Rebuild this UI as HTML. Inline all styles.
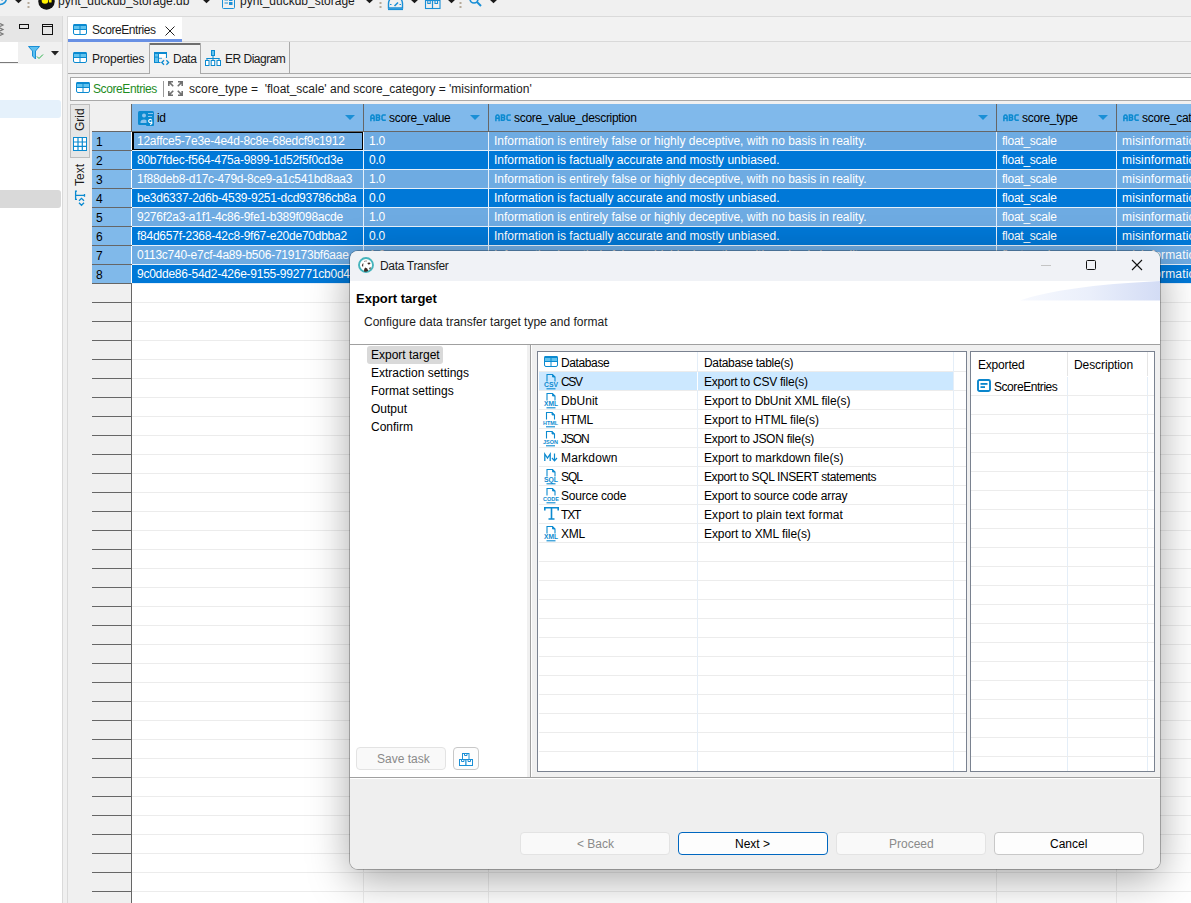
<!DOCTYPE html>
<html><head><meta charset="utf-8">
<style>
*{box-sizing:border-box;margin:0;padding:0}
html,body{width:1191px;height:903px;overflow:hidden;background:#f0f0f0;font-family:"Liberation Sans",sans-serif;font-size:12px;color:#1b1b1b}
.a{position:absolute}
.t{position:absolute;white-space:pre;line-height:14px}
svg{position:absolute;overflow:visible}
</style></head><body>

<div class="a" style="left:0px;top:0px;width:1191px;height:16px;background:#f0f0f0"></div>
<div class="a" style="left:0px;top:16px;width:1191px;height:1px;background:#e3e3e3"></div>
<div class="a" style="left:0px;top:16px;width:63px;height:887px;background:#fff"></div>
<div class="a" style="left:0px;top:16px;width:62px;height:26px;background:#e6e6e6"></div>
<div class="a" style="left:0px;top:42px;width:62px;height:22px;background:#f0f0f0"></div>
<div class="a" style="left:0px;top:42px;width:18px;height:21px;background:#fff;border-bottom:1px solid #7a7a7a"></div>
<div class="a" style="left:62px;top:16px;width:1px;height:887px;background:#dadada"></div>
<div class="a" style="left:-4px;top:100px;width:65px;height:18px;background:#e5f1fb;border-radius:3px"></div>
<div class="a" style="left:-4px;top:190px;width:65px;height:18px;background:#d9d9d9;border-radius:3px"></div>
<div class="a" style="left:63px;top:16px;width:5px;height:887px;background:#f0f0f0"></div>
<div class="a" style="left:67px;top:16px;width:1px;height:887px;background:#dadada"></div>
<div class="a" style="left:68px;top:16px;width:1123px;height:887px;background:#f0f0f0"></div>
<div class="a" style="left:68px;top:16px;width:1123px;height:1px;background:#dadada"></div>
<div class="a" style="left:68px;top:17px;width:1123px;height:24px;background:#f2f2f2"></div>
<div class="a" style="left:68px;top:17px;width:114px;height:25px;background:#fff"></div>
<div class="a" style="left:68px;top:39px;width:114px;height:3px;background:#6890e4"></div>
<div class="a" style="left:182px;top:41px;width:1009px;height:1px;background:#d9d9d9"></div>
<div class="t" style="left:92px;top:23px;letter-spacing:-0.43px">ScoreEntries</div>
<div class="a" style="left:68px;top:73px;width:1123px;height:1px;background:#a9a9a9"></div>
<div class="a" style="left:149px;top:43px;width:52px;height:31px;background:#f2f2f2;border-left:1px solid #a9a9a9;border-right:1px solid #a9a9a9"></div>
<div class="a" style="left:150px;top:43px;width:50px;height:2px;background:#6e6e6e"></div>
<div class="a" style="left:289px;top:42px;width:1px;height:31px;background:#a9a9a9"></div>
<div class="t" style="left:92px;top:52px;letter-spacing:-0.24px">Properties</div>
<div class="t" style="left:173px;top:52px;letter-spacing:-0.5px">Data</div>
<div class="t" style="left:225px;top:52px;letter-spacing:-0.5px">ER Diagram</div>
<div class="a" style="left:70px;top:77px;width:1121px;height:24px;background:#fff;border:1px solid #a9a9a9;border-right:none"></div>
<div class="t" style="left:93px;top:82px;color:#1e8c1e;letter-spacing:-0.4px">ScoreEntries</div>
<div class="a" style="left:163px;top:81px;width:1px;height:16px;background:#9a9a9a"></div>
<div class="t" style="left:189px;top:82px;">score_type =  'float_scale' and score_category = 'misinformation'</div>
<div class="a" style="left:70px;top:104px;width:20px;height:54px;background:#e6e6e6;border:1px solid #bdbdbd"></div>
<div class="t" style="left:73px;top:131px;transform-origin:0 0;transform:rotate(-90deg);color:#1b1b1b">Grid</div>
<div class="t" style="left:73px;top:186px;transform-origin:0 0;transform:rotate(-90deg);color:#1b1b1b">Text</div>
<div class="a" style="left:92px;top:104px;width:1099px;height:799px;background:#fff"></div>
<div class="a" style="left:92px;top:104px;width:39px;height:27px;background:#f0f0f0"></div>
<div class="a" style="left:131px;top:104px;width:1060px;height:27px;background:#80b9eb"></div>
<div class="a" style="left:92px;top:131px;width:1099px;height:1px;background:#666"></div>
<div class="a" style="left:131px;top:104px;width:1px;height:27px;background:#666"></div>
<div class="t" style="left:157px;top:111px;color:#000;letter-spacing:-0.3px">id</div>
<svg style="left:345px;top:115px" width="10" height="5" viewBox="0 0 10 5"><path d="M0 0H10L5 5Z" fill="#1a8fd6"/></svg>
<div class="a" style="left:363px;top:104px;width:1px;height:27px;background:#666"></div>
<div class="t" style="left:389px;top:111px;color:#000;letter-spacing:-0.3px">score_value</div>
<svg style="left:370px;top:114px" width="17" height="8" viewBox="0 0 17 8"><g fill="none" stroke="#0b8ad0" stroke-width="1.5" stroke-linejoin="bevel"><path d="M0.9 7.2V2.2L2 0.9H3L4.1 2.2V7.2M0.9 4.2H4.1"/><path d="M6.4 0.9V6.3M5.6 0.9H8.8L9.6 1.8V2.8L8.8 3.6H6.4M8.8 3.6L9.6 4.4V5.5L8.8 6.3H5.6"/><path d="M15.8 0.9H12.9L12 1.9V5.3L12.9 6.3H15.8"/></g></svg>
<svg style="left:470px;top:115px" width="10" height="5" viewBox="0 0 10 5"><path d="M0 0H10L5 5Z" fill="#1a8fd6"/></svg>
<div class="a" style="left:488px;top:104px;width:1px;height:27px;background:#666"></div>
<div class="t" style="left:514px;top:111px;color:#000;letter-spacing:-0.3px">score_value_description</div>
<svg style="left:495px;top:114px" width="17" height="8" viewBox="0 0 17 8"><g fill="none" stroke="#0b8ad0" stroke-width="1.5" stroke-linejoin="bevel"><path d="M0.9 7.2V2.2L2 0.9H3L4.1 2.2V7.2M0.9 4.2H4.1"/><path d="M6.4 0.9V6.3M5.6 0.9H8.8L9.6 1.8V2.8L8.8 3.6H6.4M8.8 3.6L9.6 4.4V5.5L8.8 6.3H5.6"/><path d="M15.8 0.9H12.9L12 1.9V5.3L12.9 6.3H15.8"/></g></svg>
<svg style="left:978px;top:115px" width="10" height="5" viewBox="0 0 10 5"><path d="M0 0H10L5 5Z" fill="#1a8fd6"/></svg>
<div class="a" style="left:996px;top:104px;width:1px;height:27px;background:#666"></div>
<div class="t" style="left:1022px;top:111px;color:#000;letter-spacing:-0.3px">score_type</div>
<svg style="left:1003px;top:114px" width="17" height="8" viewBox="0 0 17 8"><g fill="none" stroke="#0b8ad0" stroke-width="1.5" stroke-linejoin="bevel"><path d="M0.9 7.2V2.2L2 0.9H3L4.1 2.2V7.2M0.9 4.2H4.1"/><path d="M6.4 0.9V6.3M5.6 0.9H8.8L9.6 1.8V2.8L8.8 3.6H6.4M8.8 3.6L9.6 4.4V5.5L8.8 6.3H5.6"/><path d="M15.8 0.9H12.9L12 1.9V5.3L12.9 6.3H15.8"/></g></svg>
<svg style="left:1098px;top:115px" width="10" height="5" viewBox="0 0 10 5"><path d="M0 0H10L5 5Z" fill="#1a8fd6"/></svg>
<div class="a" style="left:1116px;top:104px;width:1px;height:27px;background:#666"></div>
<div class="t" style="left:1142px;top:111px;color:#000;letter-spacing:-0.3px">score_category</div>
<svg style="left:1123px;top:114px" width="17" height="8" viewBox="0 0 17 8"><g fill="none" stroke="#0b8ad0" stroke-width="1.5" stroke-linejoin="bevel"><path d="M0.9 7.2V2.2L2 0.9H3L4.1 2.2V7.2M0.9 4.2H4.1"/><path d="M6.4 0.9V6.3M5.6 0.9H8.8L9.6 1.8V2.8L8.8 3.6H6.4M8.8 3.6L9.6 4.4V5.5L8.8 6.3H5.6"/><path d="M15.8 0.9H12.9L12 1.9V5.3L12.9 6.3H15.8"/></g></svg>
<svg style="left:138px;top:111px" width="16" height="15" viewBox="0 0 16 15"><rect x="0" y="0" width="16" height="14" rx="1.5" fill="#0b8ad0"/><rect x="8" y="8" width="8" height="7" rx="1" fill="#0b8ad0"/><circle cx="6" cy="4.5" r="2" fill="#8cc4ee"/><path d="M2.5 12V10.5Q3 8.5 6 8.5Q9 8.5 8.5 10.5V12Z" fill="#8cc4ee"/><path d="M10 2.5H15M10 5.5H14" stroke="#8cc4ee" stroke-width="1"/><path d="M13.8 9.5A1.6 1.6 0 1 0 13.8 10.5V12.5L12.2 13.8" fill="none" stroke="#fff" stroke-width="1.1"/></svg>
<div class="a" style="left:92px;top:132px;width:39px;height:18px;background:#80b9ea"></div>
<div class="a" style="left:92px;top:150px;width:40px;height:1px;background:#666"></div>
<div class="a" style="left:132px;top:132px;width:1059px;height:18px;background:#6eabe2"></div>
<div class="a" style="left:132px;top:150px;width:1059px;height:1px;background:#e6f0fa"></div>
<div class="a" style="left:363px;top:132px;width:1px;height:19px;background:#e6f0fa"></div>
<div class="a" style="left:488px;top:132px;width:1px;height:19px;background:#e6f0fa"></div>
<div class="a" style="left:996px;top:132px;width:1px;height:19px;background:#e6f0fa"></div>
<div class="a" style="left:1116px;top:132px;width:1px;height:19px;background:#e6f0fa"></div>
<div class="t" style="left:96px;top:135px;color:#000">1</div>
<div class="a" style="left:132px;top:131px;width:231px;height:19px;overflow:hidden"><div class="t" style="left:5px;top:3px;color:#fff;letter-spacing:-0.25px">12affce5-7e3e-4e4d-8c8e-68edcf9c1912</div></div>
<div class="a" style="left:364px;top:131px;width:124px;height:19px;overflow:hidden"><div class="t" style="left:5px;top:3px;color:#fff;letter-spacing:-0.25px">1.0</div></div>
<div class="a" style="left:489px;top:131px;width:507px;height:19px;overflow:hidden"><div class="t" style="left:5px;top:3px;color:#fff;letter-spacing:0">Information is entirely false or highly deceptive, with no basis in reality.</div></div>
<div class="a" style="left:997px;top:131px;width:119px;height:19px;overflow:hidden"><div class="t" style="left:5px;top:3px;color:#fff;letter-spacing:-0.25px">float_scale</div></div>
<div class="a" style="left:1117px;top:131px;width:74px;height:19px;overflow:hidden"><div class="t" style="left:5px;top:3px;color:#fff;letter-spacing:0.15px">misinformation</div></div>
<div class="a" style="left:92px;top:151px;width:39px;height:18px;background:#80b9ea"></div>
<div class="a" style="left:92px;top:169px;width:40px;height:1px;background:#666"></div>
<div class="a" style="left:132px;top:151px;width:1059px;height:18px;background:#0078d7"></div>
<div class="a" style="left:132px;top:169px;width:1059px;height:1px;background:#e6f0fa"></div>
<div class="a" style="left:363px;top:151px;width:1px;height:19px;background:#e6f0fa"></div>
<div class="a" style="left:488px;top:151px;width:1px;height:19px;background:#e6f0fa"></div>
<div class="a" style="left:996px;top:151px;width:1px;height:19px;background:#e6f0fa"></div>
<div class="a" style="left:1116px;top:151px;width:1px;height:19px;background:#e6f0fa"></div>
<div class="t" style="left:96px;top:154px;color:#000">2</div>
<div class="a" style="left:132px;top:150px;width:231px;height:19px;overflow:hidden"><div class="t" style="left:5px;top:3px;color:#fff;letter-spacing:-0.25px">80b7fdec-f564-475a-9899-1d52f5f0cd3e</div></div>
<div class="a" style="left:364px;top:150px;width:124px;height:19px;overflow:hidden"><div class="t" style="left:5px;top:3px;color:#fff;letter-spacing:-0.25px">0.0</div></div>
<div class="a" style="left:489px;top:150px;width:507px;height:19px;overflow:hidden"><div class="t" style="left:5px;top:3px;color:#fff;letter-spacing:0">Information is factually accurate and mostly unbiased.</div></div>
<div class="a" style="left:997px;top:150px;width:119px;height:19px;overflow:hidden"><div class="t" style="left:5px;top:3px;color:#fff;letter-spacing:-0.25px">float_scale</div></div>
<div class="a" style="left:1117px;top:150px;width:74px;height:19px;overflow:hidden"><div class="t" style="left:5px;top:3px;color:#fff;letter-spacing:0.15px">misinformation</div></div>
<div class="a" style="left:92px;top:170px;width:39px;height:18px;background:#80b9ea"></div>
<div class="a" style="left:92px;top:188px;width:40px;height:1px;background:#666"></div>
<div class="a" style="left:132px;top:170px;width:1059px;height:18px;background:#6eabe2"></div>
<div class="a" style="left:132px;top:188px;width:1059px;height:1px;background:#e6f0fa"></div>
<div class="a" style="left:363px;top:170px;width:1px;height:19px;background:#e6f0fa"></div>
<div class="a" style="left:488px;top:170px;width:1px;height:19px;background:#e6f0fa"></div>
<div class="a" style="left:996px;top:170px;width:1px;height:19px;background:#e6f0fa"></div>
<div class="a" style="left:1116px;top:170px;width:1px;height:19px;background:#e6f0fa"></div>
<div class="t" style="left:96px;top:173px;color:#000">3</div>
<div class="a" style="left:132px;top:169px;width:231px;height:19px;overflow:hidden"><div class="t" style="left:5px;top:3px;color:#fff;letter-spacing:-0.25px">1f88deb8-d17c-479d-8ce9-a1c541bd8aa3</div></div>
<div class="a" style="left:364px;top:169px;width:124px;height:19px;overflow:hidden"><div class="t" style="left:5px;top:3px;color:#fff;letter-spacing:-0.25px">1.0</div></div>
<div class="a" style="left:489px;top:169px;width:507px;height:19px;overflow:hidden"><div class="t" style="left:5px;top:3px;color:#fff;letter-spacing:0">Information is entirely false or highly deceptive, with no basis in reality.</div></div>
<div class="a" style="left:997px;top:169px;width:119px;height:19px;overflow:hidden"><div class="t" style="left:5px;top:3px;color:#fff;letter-spacing:-0.25px">float_scale</div></div>
<div class="a" style="left:1117px;top:169px;width:74px;height:19px;overflow:hidden"><div class="t" style="left:5px;top:3px;color:#fff;letter-spacing:0.15px">misinformation</div></div>
<div class="a" style="left:92px;top:189px;width:39px;height:18px;background:#80b9ea"></div>
<div class="a" style="left:92px;top:207px;width:40px;height:1px;background:#666"></div>
<div class="a" style="left:132px;top:189px;width:1059px;height:18px;background:#0078d7"></div>
<div class="a" style="left:132px;top:207px;width:1059px;height:1px;background:#e6f0fa"></div>
<div class="a" style="left:363px;top:189px;width:1px;height:19px;background:#e6f0fa"></div>
<div class="a" style="left:488px;top:189px;width:1px;height:19px;background:#e6f0fa"></div>
<div class="a" style="left:996px;top:189px;width:1px;height:19px;background:#e6f0fa"></div>
<div class="a" style="left:1116px;top:189px;width:1px;height:19px;background:#e6f0fa"></div>
<div class="t" style="left:96px;top:192px;color:#000">4</div>
<div class="a" style="left:132px;top:188px;width:231px;height:19px;overflow:hidden"><div class="t" style="left:5px;top:3px;color:#fff;letter-spacing:-0.25px">be3d6337-2d6b-4539-9251-dcd93786cb8a</div></div>
<div class="a" style="left:364px;top:188px;width:124px;height:19px;overflow:hidden"><div class="t" style="left:5px;top:3px;color:#fff;letter-spacing:-0.25px">0.0</div></div>
<div class="a" style="left:489px;top:188px;width:507px;height:19px;overflow:hidden"><div class="t" style="left:5px;top:3px;color:#fff;letter-spacing:0">Information is factually accurate and mostly unbiased.</div></div>
<div class="a" style="left:997px;top:188px;width:119px;height:19px;overflow:hidden"><div class="t" style="left:5px;top:3px;color:#fff;letter-spacing:-0.25px">float_scale</div></div>
<div class="a" style="left:1117px;top:188px;width:74px;height:19px;overflow:hidden"><div class="t" style="left:5px;top:3px;color:#fff;letter-spacing:0.15px">misinformation</div></div>
<div class="a" style="left:92px;top:208px;width:39px;height:18px;background:#80b9ea"></div>
<div class="a" style="left:92px;top:226px;width:40px;height:1px;background:#666"></div>
<div class="a" style="left:132px;top:208px;width:1059px;height:18px;background:#6eabe2"></div>
<div class="a" style="left:132px;top:226px;width:1059px;height:1px;background:#e6f0fa"></div>
<div class="a" style="left:363px;top:208px;width:1px;height:19px;background:#e6f0fa"></div>
<div class="a" style="left:488px;top:208px;width:1px;height:19px;background:#e6f0fa"></div>
<div class="a" style="left:996px;top:208px;width:1px;height:19px;background:#e6f0fa"></div>
<div class="a" style="left:1116px;top:208px;width:1px;height:19px;background:#e6f0fa"></div>
<div class="t" style="left:96px;top:211px;color:#000">5</div>
<div class="a" style="left:132px;top:207px;width:231px;height:19px;overflow:hidden"><div class="t" style="left:5px;top:3px;color:#fff;letter-spacing:-0.25px">9276f2a3-a1f1-4c86-9fe1-b389f098acde</div></div>
<div class="a" style="left:364px;top:207px;width:124px;height:19px;overflow:hidden"><div class="t" style="left:5px;top:3px;color:#fff;letter-spacing:-0.25px">1.0</div></div>
<div class="a" style="left:489px;top:207px;width:507px;height:19px;overflow:hidden"><div class="t" style="left:5px;top:3px;color:#fff;letter-spacing:0">Information is entirely false or highly deceptive, with no basis in reality.</div></div>
<div class="a" style="left:997px;top:207px;width:119px;height:19px;overflow:hidden"><div class="t" style="left:5px;top:3px;color:#fff;letter-spacing:-0.25px">float_scale</div></div>
<div class="a" style="left:1117px;top:207px;width:74px;height:19px;overflow:hidden"><div class="t" style="left:5px;top:3px;color:#fff;letter-spacing:0.15px">misinformation</div></div>
<div class="a" style="left:92px;top:227px;width:39px;height:18px;background:#80b9ea"></div>
<div class="a" style="left:92px;top:245px;width:40px;height:1px;background:#666"></div>
<div class="a" style="left:132px;top:227px;width:1059px;height:18px;background:#0078d7"></div>
<div class="a" style="left:132px;top:245px;width:1059px;height:1px;background:#e6f0fa"></div>
<div class="a" style="left:363px;top:227px;width:1px;height:19px;background:#e6f0fa"></div>
<div class="a" style="left:488px;top:227px;width:1px;height:19px;background:#e6f0fa"></div>
<div class="a" style="left:996px;top:227px;width:1px;height:19px;background:#e6f0fa"></div>
<div class="a" style="left:1116px;top:227px;width:1px;height:19px;background:#e6f0fa"></div>
<div class="t" style="left:96px;top:230px;color:#000">6</div>
<div class="a" style="left:132px;top:226px;width:231px;height:19px;overflow:hidden"><div class="t" style="left:5px;top:3px;color:#fff;letter-spacing:-0.25px">f84d657f-2368-42c8-9f67-e20de70dbba2</div></div>
<div class="a" style="left:364px;top:226px;width:124px;height:19px;overflow:hidden"><div class="t" style="left:5px;top:3px;color:#fff;letter-spacing:-0.25px">0.0</div></div>
<div class="a" style="left:489px;top:226px;width:507px;height:19px;overflow:hidden"><div class="t" style="left:5px;top:3px;color:#fff;letter-spacing:0">Information is factually accurate and mostly unbiased.</div></div>
<div class="a" style="left:997px;top:226px;width:119px;height:19px;overflow:hidden"><div class="t" style="left:5px;top:3px;color:#fff;letter-spacing:-0.25px">float_scale</div></div>
<div class="a" style="left:1117px;top:226px;width:74px;height:19px;overflow:hidden"><div class="t" style="left:5px;top:3px;color:#fff;letter-spacing:0.15px">misinformation</div></div>
<div class="a" style="left:92px;top:246px;width:39px;height:18px;background:#80b9ea"></div>
<div class="a" style="left:92px;top:264px;width:40px;height:1px;background:#666"></div>
<div class="a" style="left:132px;top:246px;width:1059px;height:18px;background:#6eabe2"></div>
<div class="a" style="left:132px;top:264px;width:1059px;height:1px;background:#e6f0fa"></div>
<div class="a" style="left:363px;top:246px;width:1px;height:19px;background:#e6f0fa"></div>
<div class="a" style="left:488px;top:246px;width:1px;height:19px;background:#e6f0fa"></div>
<div class="a" style="left:996px;top:246px;width:1px;height:19px;background:#e6f0fa"></div>
<div class="a" style="left:1116px;top:246px;width:1px;height:19px;background:#e6f0fa"></div>
<div class="t" style="left:96px;top:249px;color:#000">7</div>
<div class="a" style="left:132px;top:245px;width:231px;height:19px;overflow:hidden"><div class="t" style="left:5px;top:3px;color:#fff;letter-spacing:-0.25px">0113c740-e7cf-4a89-b506-719173bf6aae</div></div>
<div class="a" style="left:364px;top:245px;width:124px;height:19px;overflow:hidden"><div class="t" style="left:5px;top:3px;color:#fff;letter-spacing:-0.25px">1.0</div></div>
<div class="a" style="left:489px;top:245px;width:507px;height:19px;overflow:hidden"><div class="t" style="left:5px;top:3px;color:#fff;letter-spacing:0">Information is entirely false or highly deceptive, with no basis in reality.</div></div>
<div class="a" style="left:997px;top:245px;width:119px;height:19px;overflow:hidden"><div class="t" style="left:5px;top:3px;color:#fff;letter-spacing:-0.25px">float_scale</div></div>
<div class="a" style="left:1117px;top:245px;width:74px;height:19px;overflow:hidden"><div class="t" style="left:5px;top:3px;color:#fff;letter-spacing:0.15px">misinformation</div></div>
<div class="a" style="left:92px;top:265px;width:39px;height:18px;background:#80b9ea"></div>
<div class="a" style="left:92px;top:283px;width:40px;height:1px;background:#666"></div>
<div class="a" style="left:132px;top:265px;width:1059px;height:18px;background:#0078d7"></div>
<div class="a" style="left:132px;top:283px;width:1059px;height:1px;background:#e6f0fa"></div>
<div class="a" style="left:363px;top:265px;width:1px;height:19px;background:#e6f0fa"></div>
<div class="a" style="left:488px;top:265px;width:1px;height:19px;background:#e6f0fa"></div>
<div class="a" style="left:996px;top:265px;width:1px;height:19px;background:#e6f0fa"></div>
<div class="a" style="left:1116px;top:265px;width:1px;height:19px;background:#e6f0fa"></div>
<div class="t" style="left:96px;top:268px;color:#000">8</div>
<div class="a" style="left:132px;top:264px;width:231px;height:19px;overflow:hidden"><div class="t" style="left:5px;top:3px;color:#fff;letter-spacing:-0.25px">9c0dde86-54d2-426e-9155-992771cb0d41</div></div>
<div class="a" style="left:364px;top:264px;width:124px;height:19px;overflow:hidden"><div class="t" style="left:5px;top:3px;color:#fff;letter-spacing:-0.25px">0.0</div></div>
<div class="a" style="left:489px;top:264px;width:507px;height:19px;overflow:hidden"><div class="t" style="left:5px;top:3px;color:#fff;letter-spacing:0">Information is factually accurate and mostly unbiased.</div></div>
<div class="a" style="left:997px;top:264px;width:119px;height:19px;overflow:hidden"><div class="t" style="left:5px;top:3px;color:#fff;letter-spacing:-0.25px">float_scale</div></div>
<div class="a" style="left:1117px;top:264px;width:74px;height:19px;overflow:hidden"><div class="t" style="left:5px;top:3px;color:#fff;letter-spacing:0.15px">misinformation</div></div>
<div class="a" style="left:132px;top:132px;width:231px;height:18px;border:1px solid #000;border-left-width:2px;border-top-width:1px"></div>
<div class="a" style="left:92px;top:284px;width:39px;height:18px;background:#f0f0f0"></div>
<div class="a" style="left:92px;top:302px;width:39px;height:1px;background:#666"></div>
<div class="a" style="left:132px;top:302px;width:1059px;height:1px;background:#ececec"></div>
<div class="a" style="left:92px;top:303px;width:39px;height:18px;background:#f0f0f0"></div>
<div class="a" style="left:92px;top:321px;width:39px;height:1px;background:#666"></div>
<div class="a" style="left:132px;top:321px;width:1059px;height:1px;background:#ececec"></div>
<div class="a" style="left:92px;top:322px;width:39px;height:18px;background:#f0f0f0"></div>
<div class="a" style="left:92px;top:340px;width:39px;height:1px;background:#666"></div>
<div class="a" style="left:132px;top:340px;width:1059px;height:1px;background:#ececec"></div>
<div class="a" style="left:92px;top:341px;width:39px;height:18px;background:#f0f0f0"></div>
<div class="a" style="left:92px;top:359px;width:39px;height:1px;background:#666"></div>
<div class="a" style="left:132px;top:359px;width:1059px;height:1px;background:#ececec"></div>
<div class="a" style="left:92px;top:360px;width:39px;height:18px;background:#f0f0f0"></div>
<div class="a" style="left:92px;top:378px;width:39px;height:1px;background:#666"></div>
<div class="a" style="left:132px;top:378px;width:1059px;height:1px;background:#ececec"></div>
<div class="a" style="left:92px;top:379px;width:39px;height:18px;background:#f0f0f0"></div>
<div class="a" style="left:92px;top:397px;width:39px;height:1px;background:#666"></div>
<div class="a" style="left:132px;top:397px;width:1059px;height:1px;background:#ececec"></div>
<div class="a" style="left:92px;top:398px;width:39px;height:18px;background:#f0f0f0"></div>
<div class="a" style="left:92px;top:416px;width:39px;height:1px;background:#666"></div>
<div class="a" style="left:132px;top:416px;width:1059px;height:1px;background:#ececec"></div>
<div class="a" style="left:92px;top:417px;width:39px;height:18px;background:#f0f0f0"></div>
<div class="a" style="left:92px;top:435px;width:39px;height:1px;background:#666"></div>
<div class="a" style="left:132px;top:435px;width:1059px;height:1px;background:#ececec"></div>
<div class="a" style="left:92px;top:436px;width:39px;height:18px;background:#f0f0f0"></div>
<div class="a" style="left:92px;top:454px;width:39px;height:1px;background:#666"></div>
<div class="a" style="left:132px;top:454px;width:1059px;height:1px;background:#ececec"></div>
<div class="a" style="left:92px;top:455px;width:39px;height:18px;background:#f0f0f0"></div>
<div class="a" style="left:92px;top:473px;width:39px;height:1px;background:#666"></div>
<div class="a" style="left:132px;top:473px;width:1059px;height:1px;background:#ececec"></div>
<div class="a" style="left:92px;top:474px;width:39px;height:18px;background:#f0f0f0"></div>
<div class="a" style="left:92px;top:492px;width:39px;height:1px;background:#666"></div>
<div class="a" style="left:132px;top:492px;width:1059px;height:1px;background:#ececec"></div>
<div class="a" style="left:92px;top:493px;width:39px;height:18px;background:#f0f0f0"></div>
<div class="a" style="left:92px;top:511px;width:39px;height:1px;background:#666"></div>
<div class="a" style="left:132px;top:511px;width:1059px;height:1px;background:#ececec"></div>
<div class="a" style="left:92px;top:512px;width:39px;height:18px;background:#f0f0f0"></div>
<div class="a" style="left:92px;top:530px;width:39px;height:1px;background:#666"></div>
<div class="a" style="left:132px;top:530px;width:1059px;height:1px;background:#ececec"></div>
<div class="a" style="left:92px;top:531px;width:39px;height:18px;background:#f0f0f0"></div>
<div class="a" style="left:92px;top:549px;width:39px;height:1px;background:#666"></div>
<div class="a" style="left:132px;top:549px;width:1059px;height:1px;background:#ececec"></div>
<div class="a" style="left:92px;top:550px;width:39px;height:18px;background:#f0f0f0"></div>
<div class="a" style="left:92px;top:568px;width:39px;height:1px;background:#666"></div>
<div class="a" style="left:132px;top:568px;width:1059px;height:1px;background:#ececec"></div>
<div class="a" style="left:92px;top:569px;width:39px;height:18px;background:#f0f0f0"></div>
<div class="a" style="left:92px;top:587px;width:39px;height:1px;background:#666"></div>
<div class="a" style="left:132px;top:587px;width:1059px;height:1px;background:#ececec"></div>
<div class="a" style="left:92px;top:588px;width:39px;height:18px;background:#f0f0f0"></div>
<div class="a" style="left:92px;top:606px;width:39px;height:1px;background:#666"></div>
<div class="a" style="left:132px;top:606px;width:1059px;height:1px;background:#ececec"></div>
<div class="a" style="left:92px;top:607px;width:39px;height:18px;background:#f0f0f0"></div>
<div class="a" style="left:92px;top:625px;width:39px;height:1px;background:#666"></div>
<div class="a" style="left:132px;top:625px;width:1059px;height:1px;background:#ececec"></div>
<div class="a" style="left:92px;top:626px;width:39px;height:18px;background:#f0f0f0"></div>
<div class="a" style="left:92px;top:644px;width:39px;height:1px;background:#666"></div>
<div class="a" style="left:132px;top:644px;width:1059px;height:1px;background:#ececec"></div>
<div class="a" style="left:92px;top:645px;width:39px;height:18px;background:#f0f0f0"></div>
<div class="a" style="left:92px;top:663px;width:39px;height:1px;background:#666"></div>
<div class="a" style="left:132px;top:663px;width:1059px;height:1px;background:#ececec"></div>
<div class="a" style="left:92px;top:664px;width:39px;height:18px;background:#f0f0f0"></div>
<div class="a" style="left:92px;top:682px;width:39px;height:1px;background:#666"></div>
<div class="a" style="left:132px;top:682px;width:1059px;height:1px;background:#ececec"></div>
<div class="a" style="left:92px;top:683px;width:39px;height:18px;background:#f0f0f0"></div>
<div class="a" style="left:92px;top:701px;width:39px;height:1px;background:#666"></div>
<div class="a" style="left:132px;top:701px;width:1059px;height:1px;background:#ececec"></div>
<div class="a" style="left:92px;top:702px;width:39px;height:18px;background:#f0f0f0"></div>
<div class="a" style="left:92px;top:720px;width:39px;height:1px;background:#666"></div>
<div class="a" style="left:132px;top:720px;width:1059px;height:1px;background:#ececec"></div>
<div class="a" style="left:92px;top:721px;width:39px;height:18px;background:#f0f0f0"></div>
<div class="a" style="left:92px;top:739px;width:39px;height:1px;background:#666"></div>
<div class="a" style="left:132px;top:739px;width:1059px;height:1px;background:#ececec"></div>
<div class="a" style="left:92px;top:740px;width:39px;height:18px;background:#f0f0f0"></div>
<div class="a" style="left:92px;top:758px;width:39px;height:1px;background:#666"></div>
<div class="a" style="left:132px;top:758px;width:1059px;height:1px;background:#ececec"></div>
<div class="a" style="left:92px;top:759px;width:39px;height:18px;background:#f0f0f0"></div>
<div class="a" style="left:92px;top:777px;width:39px;height:1px;background:#666"></div>
<div class="a" style="left:132px;top:777px;width:1059px;height:1px;background:#ececec"></div>
<div class="a" style="left:92px;top:778px;width:39px;height:18px;background:#f0f0f0"></div>
<div class="a" style="left:92px;top:796px;width:39px;height:1px;background:#666"></div>
<div class="a" style="left:132px;top:796px;width:1059px;height:1px;background:#ececec"></div>
<div class="a" style="left:92px;top:797px;width:39px;height:18px;background:#f0f0f0"></div>
<div class="a" style="left:92px;top:815px;width:39px;height:1px;background:#666"></div>
<div class="a" style="left:132px;top:815px;width:1059px;height:1px;background:#ececec"></div>
<div class="a" style="left:92px;top:816px;width:39px;height:18px;background:#f0f0f0"></div>
<div class="a" style="left:92px;top:834px;width:39px;height:1px;background:#666"></div>
<div class="a" style="left:132px;top:834px;width:1059px;height:1px;background:#ececec"></div>
<div class="a" style="left:92px;top:835px;width:39px;height:18px;background:#f0f0f0"></div>
<div class="a" style="left:92px;top:853px;width:39px;height:1px;background:#666"></div>
<div class="a" style="left:132px;top:853px;width:1059px;height:1px;background:#ececec"></div>
<div class="a" style="left:92px;top:854px;width:39px;height:18px;background:#f0f0f0"></div>
<div class="a" style="left:92px;top:872px;width:39px;height:1px;background:#666"></div>
<div class="a" style="left:132px;top:872px;width:1059px;height:1px;background:#ececec"></div>
<div class="a" style="left:92px;top:873px;width:39px;height:18px;background:#f0f0f0"></div>
<div class="a" style="left:92px;top:891px;width:39px;height:1px;background:#666"></div>
<div class="a" style="left:132px;top:891px;width:1059px;height:1px;background:#ececec"></div>
<div class="a" style="left:92px;top:892px;width:39px;height:18px;background:#f0f0f0"></div>
<div class="a" style="left:92px;top:910px;width:39px;height:1px;background:#666"></div>
<div class="a" style="left:132px;top:910px;width:1059px;height:1px;background:#ececec"></div>
<div class="a" style="left:131px;top:283px;width:1px;height:620px;background:#666"></div>
<div class="a" style="left:363px;top:283px;width:1px;height:620px;background:#ececec"></div>
<div class="a" style="left:488px;top:283px;width:1px;height:620px;background:#ececec"></div>
<div class="a" style="left:996px;top:283px;width:1px;height:620px;background:#ececec"></div>
<div class="a" style="left:1116px;top:283px;width:1px;height:620px;background:#ececec"></div>
<div class="a" style="left:0;top:0;width:1191px;height:16px;overflow:hidden">
<svg style="left:-8px;top:-10px" width="16" height="16" viewBox="0 0 16 16"><circle cx="8" cy="8" r="6.5" fill="none" stroke="#1a8fd6" stroke-width="1.5"/><path d="M8 4V8L10.5 10.5" stroke="#1a8fd6" stroke-width="1.3" fill="none"/></svg>
<svg style="left:15px;top:0px" width="7" height="5" viewBox="0 0 7 5"><path d="M-0.5 -0.5H7.5L3.5 3.2Z" fill="#1a1a1a"/></svg>
<svg style="left:27px;top:1px" width="3" height="8" viewBox="0 0 3 8"><rect x="0.5" y="1" width="2" height="2" fill="#b5aa9a"/><rect x="0.5" y="5" width="2" height="2" fill="#b5aa9a"/></svg>
<svg style="left:38px;top:-7px" width="17" height="17" viewBox="0 0 17 17"><circle cx="8.5" cy="8.5" r="8.2" fill="#111"/><circle cx="7" cy="7.5" r="3.3" fill="#fff100"/><rect x="11" y="6" width="2.6" height="3.5" rx="0.6" fill="#fff100"/></svg>
<div class="t" style="left:58px;top:-6px;color:#1b1b1b">pyrit_duckdb_storage.db</div>
<svg style="left:203px;top:0px" width="7" height="5" viewBox="0 0 7 5"><path d="M-0.5 -0.5H7.5L3.5 3.2Z" fill="#1a1a1a"/></svg>
<svg style="left:222px;top:-4px" width="13" height="13" viewBox="0 0 13 13"><rect x="0.5" y="0.5" width="12" height="12" rx="1" fill="none" stroke="#1a8fd6"/><path d="M2.5 4H6M2.5 7H6" stroke="#1a8fd6"/><rect x="7" y="2.5" width="3.5" height="2.5" fill="#1a8fd6"/><rect x="7" y="6" width="3.5" height="3" fill="#1a8fd6"/></svg>
<div class="t" style="left:240px;top:-6px;color:#1b1b1b">pyrit_duckdb_storage</div>
<svg style="left:366px;top:0px" width="7" height="5" viewBox="0 0 7 5"><path d="M-0.5 -0.5H7.5L3.5 3.2Z" fill="#1a1a1a"/></svg>
<svg style="left:379px;top:1px" width="3" height="8" viewBox="0 0 3 8"><rect x="0.5" y="1" width="2" height="2" fill="#b5aa9a"/><rect x="0.5" y="5" width="2" height="2" fill="#b5aa9a"/></svg>
<svg style="left:387px;top:-5px" width="17" height="16" viewBox="0 0 17 16"><path d="M1.5 13V8.5A7 7 0 0 1 15.5 8.5V13Z" fill="none" stroke="#1a8fd6" stroke-width="1.4"/><path d="M1 14.3H16" stroke="#1a8fd6" stroke-width="1.6"/><path d="M7.5 11L11 7.5" stroke="#1a8fd6" stroke-width="1.6"/><path d="M3 9.5H4.5M12.5 9.5H14" stroke="#1a8fd6" stroke-width="1"/></svg>
<svg style="left:411px;top:0px" width="7" height="5" viewBox="0 0 7 5"><path d="M-0.5 -0.5H7.5L3.5 3.2Z" fill="#1a1a1a"/></svg>
<svg style="left:425px;top:-2px" width="16" height="12" viewBox="0 0 16 12"><g fill="none" stroke="#1a8fd6" stroke-width="1.1"><rect x="0.5" y="2.5" width="7" height="8"/><rect x="7.5" y="2.5" width="7.5" height="8"/><path d="M2.8 2.5V5.5H5.2V2.5M10 2.5V5.5H12.5V2.5"/></g></svg>
<svg style="left:448px;top:0px" width="7" height="5" viewBox="0 0 7 5"><path d="M-0.5 -0.5H7.5L3.5 3.2Z" fill="#1a1a1a"/></svg>
<svg style="left:459px;top:1px" width="3" height="8" viewBox="0 0 3 8"><rect x="0.5" y="1" width="2" height="2" fill="#b5aa9a"/><rect x="0.5" y="5" width="2" height="2" fill="#b5aa9a"/></svg>
<svg style="left:469px;top:-5px" width="14" height="12" viewBox="0 0 14 12"><circle cx="5" cy="4" r="4" fill="none" stroke="#1a8fd6" stroke-width="1.6"/><path d="M8 7L12 11" stroke="#1a8fd6" stroke-width="2"/></svg>
<svg style="left:490px;top:0px" width="7" height="5" viewBox="0 0 7 5"><path d="M-0.5 -0.5H7.5L3.5 3.2Z" fill="#1a1a1a"/></svg>
</div>
<svg style="left:73px;top:24px" width="14" height="11" viewBox="0 0 14 11"><rect x="0.5" y="0.5" width="13" height="10" rx="1.5" fill="#fff" stroke="#0b8ad0"/><rect x="0.5" y="0" width="13" height="2" fill="#0b8ad0"/><rect x="1" y="2" width="12" height="3.5" fill="#62c3ee"/><path d="M0.5 5.5H13.5M7 0.5V10.5" stroke="#0b8ad0"/></svg>
<svg style="left:73px;top:52px" width="14" height="11" viewBox="0 0 14 11"><rect x="0.5" y="0.5" width="13" height="10" rx="1.5" fill="#fff" stroke="#0b8ad0"/><rect x="0.5" y="0" width="13" height="2" fill="#0b8ad0"/><rect x="1" y="2" width="12" height="3.5" fill="#62c3ee"/><path d="M0.5 5.5H13.5M7 0.5V10.5" stroke="#0b8ad0"/></svg>
<svg style="left:76px;top:82px" width="14" height="11" viewBox="0 0 14 11"><rect x="0.5" y="0.5" width="13" height="10" rx="1.5" fill="#fff" stroke="#0b8ad0"/><rect x="0.5" y="0" width="13" height="2" fill="#0b8ad0"/><rect x="1" y="2" width="12" height="3.5" fill="#62c3ee"/><path d="M0.5 5.5H13.5M7 0.5V10.5" stroke="#0b8ad0"/></svg>
<svg style="left:165px;top:26px" width="10" height="10" viewBox="0 0 10 10"><path d="M0.5 0.5L9.5 9.5M9.5 0.5L0.5 9.5" stroke="#222" stroke-width="1"/></svg>
<svg style="left:154px;top:52px" width="16" height="14" viewBox="0 0 16 14"><rect x="0" y="0" width="13" height="2" fill="#0b8ad0"/><rect x="0" y="0" width="5" height="11" fill="#0b8ad0"/><rect x="1" y="2" width="3" height="2.6" fill="#62c3ee"/><rect x="1" y="5.6" width="3" height="4.4" fill="#62c3ee"/><rect x="11.8" y="0" width="1.2" height="6" fill="#0b8ad0"/><rect x="5" y="5.6" width="3" height="1" fill="#0b8ad0"/><rect x="5" y="10" width="1.5" height="1" fill="#0b8ad0"/><rect x="5" y="2" width="6.8" height="3.6" fill="#fff"/><path d="M10 8.2L7.8 10.5L10 12.8M12.4 8.2L14.6 10.5L12.4 12.8" fill="none" stroke="#0b8ad0" stroke-width="1.3"/></svg>
<svg style="left:205px;top:50px" width="16" height="16" viewBox="0 0 16 16"><rect x="6.5" y="0.5" width="3" height="5" fill="#62c3ee" stroke="#0b8ad0"/><path d="M8 5.5V8M1.5 8.5H14.5M2 8V10M8 8V10M14 8V10" stroke="#0b8ad0"/><rect x="0.5" y="10.5" width="3.5" height="5" fill="#fff" stroke="#0b8ad0"/><rect x="6.2" y="10.5" width="3.5" height="5" fill="#fff" stroke="#0b8ad0"/><rect x="12" y="10.5" width="3.5" height="5" fill="#fff" stroke="#0b8ad0"/></svg>
<svg style="left:168px;top:81px" width="15" height="15" viewBox="0 0 15 15"><g fill="#707070"><path d="M0 0H5V1.6H2.7L5.8 4.7L4.7 5.8L1.6 2.7V5H0Z"/><path d="M15 0H10V1.6H12.3L9.2 4.7L10.3 5.8L13.4 2.7V5H15Z"/><path d="M0 15H5V13.4H2.7L5.8 10.3L4.7 9.2L1.6 12.3V10H0Z"/><path d="M15 15H10V13.4H12.3L9.2 10.3L10.3 9.2L13.4 12.3V10H15Z"/></g></svg>
<svg style="left:73px;top:137px" width="14" height="14" viewBox="0 0 14 14"><rect x="0.5" y="0.5" width="13" height="13" fill="#fff" stroke="#0b8ad0"/><path d="M0.5 5H13.5M0.5 9.3H13.5M5 0.5V13.5M9.3 0.5V13.5" stroke="#0b8ad0" stroke-width="1.2"/></svg>
<svg style="left:70px;top:185px" width="20" height="25" viewBox="0 0 20 25"><g fill="none" stroke="#0b8ad0" stroke-width="1.3"><path d="M7 6.2H5.6V14.3H7M5.6 10.4H14.5M14.5 9V11.8M9 15.8L11.5 13.3L14 15.8M9 17.8L11.5 20.3L14 17.8"/></g></svg>
<svg style="left:19px;top:24px" width="10" height="5" viewBox="0 0 10 5"><rect x="0.5" y="0.5" width="9" height="4" fill="none" stroke="#111"/></svg>
<svg style="left:42px;top:24px" width="11" height="11" viewBox="0 0 11 11"><rect x="0.5" y="0.5" width="10" height="10" fill="none" stroke="#111"/><path d="M0.5 2.5H10.5" stroke="#111"/></svg>
<svg style="left:0px;top:22px" width="5" height="15" viewBox="0 0 5 15"><path d="M0 1.5L3 3L0 4.5M0 6L3 7.5L0 9M0 10.5L3 12L0 13.5" fill="none" stroke="#777" stroke-width="1.2"/></svg>
<svg style="left:28px;top:46px" width="17" height="14" viewBox="0 0 17 14"><path d="M0.5 0.5H11.5L7.5 5V13L4.5 10V5Z" fill="#5ec0ef" stroke="#1a8fd6"/><path d="M9 10.5L11 12.5L15 8.5" fill="none" stroke="#2bb14a" stroke-width="1"/></svg>
<svg style="left:51px;top:51px" width="8" height="5" viewBox="0 0 8 5"><path d="M0 0H8L4 4.5Z" fill="#222"/></svg>
<div class="a" style="left:350px;top:251px;width:810px;height:618px;background:#f0f0f0;border-radius:8px;box-shadow:0 10px 42px rgba(0,0,0,.35),0 0 0 1px rgba(0,0,0,.26);overflow:hidden">
<div class="a" style="left:-1px;top:0px;width:811px;height:30px;background:#f0f2f6"></div>
<svg style="left:8px;top:6px" width="16" height="16" viewBox="0 0 16 16"><circle cx="8" cy="8" r="7" fill="#fff" stroke="#45b4bc" stroke-width="1.9"/><path d="M6 14.6Q5.8 11.6 7.3 10.6Q9.6 11 10.2 13.8Q9 14.9 6 14.6Z" fill="#3d2a22"/><path d="M9.3 5.9Q11 5.3 12.6 5.9Q11.6 7.7 10.4 7.4Z" fill="#3d2a22"/><path d="M3.8 8.8Q4 6.5 5.4 6.1L5.1 9.9Z" fill="#4a3a34"/><path d="M11.8 10.2L13 10.6L12.3 12.6L11 12Z" fill="#5a4a44"/><path d="M6 4.6Q7.5 3.8 9 4" stroke="#7a6a64" stroke-width="0.7" fill="none"/></svg>
<div class="t" style="left:30px;top:8px;letter-spacing:-0.32px">Data Transfer</div>
<div class="a" style="left:691px;top:14px;width:10px;height:1px;background:#c4c4c4"></div>
<div class="a" style="left:736px;top:9px;width:10px;height:10px;border:1px solid #111;border-radius:1.5px"></div>
<svg style="left:781px;top:8px" width="12" height="12" viewBox="0 0 12 12"><path d="M1 1 L11 11 M11 1 L1 11" stroke="#111" stroke-width="1.1"/></svg>
<div class="a" style="left:-1px;top:30px;width:811px;height:63px;background:#fff"></div>
<svg style="left:670px;top:29px" width="140" height="22" viewBox="0 0 140 22"><defs><linearGradient id="sw" x1="0" x2="1"><stop offset="0" stop-color="#f7f9fe"/><stop offset="0.5" stop-color="#eaeffb"/><stop offset="1" stop-color="#d3dcf5"/></linearGradient></defs><path d="M0 20.6 Q 40 6 140 1 L140 20.6 Z" fill="url(#sw)"/></svg>
<div class="t" style="left:6px;top:41px;font-weight:bold;font-size:13px;color:#000">Export target</div>
<div class="t" style="left:14px;top:64px;">Configure data transfer target type and format</div>
<div class="a" style="left:-1px;top:93px;width:811px;height:1px;background:#a0a0a0"></div>
<div class="a" style="left:-1px;top:94px;width:811px;height:1px;background:#fff"></div>
<div class="a" style="left:-1px;top:94px;width:178px;height:432px;background:#fff"></div>
<div class="a" style="left:177px;top:94px;width:633px;height:432px;background:#f0f0f0"></div>
<div class="a" style="left:180px;top:94px;width:1px;height:432px;background:#a0a0a0"></div>
<div class="a" style="left:181px;top:94px;width:1px;height:432px;background:#fff"></div>
<div class="a" style="left:17px;top:95px;width:76px;height:18px;background:#d9d9d9;border-radius:3px"></div>
<div class="t" style="left:21px;top:97px;color:#000">Export target</div>
<div class="t" style="left:21px;top:115px;color:#000">Extraction settings</div>
<div class="t" style="left:21px;top:133px;color:#000">Format settings</div>
<div class="t" style="left:21px;top:151px;color:#000">Output</div>
<div class="t" style="left:21px;top:169px;color:#000">Confirm</div>
<div class="a" style="left:6px;top:496px;width:90px;height:23px;background:#f9f9f9;border:1px solid #e3e3e3;border-radius:4px"></div>
<div class="t" style="left:27px;top:501px;color:#8a8a8a">Save task</div>
<div class="a" style="left:103px;top:496px;width:26px;height:23px;background:#fdfdfd;border:1px solid #c8c8c8;border-radius:4px"></div>
<svg style="left:109px;top:501px" width="14" height="14" viewBox="0 0 14 14"><g fill="#fff" stroke="#1a8fd6" stroke-width="1"><rect x="3.5" y="1.5" width="6.5" height="6"/><rect x="0.5" y="7.5" width="6.5" height="6"/><rect x="7" y="7.5" width="6.5" height="6"/><path d="M5.5 1.5V3.5H8V1.5M2.5 7.5V9.5H5V7.5M9 7.5V9.5H11.5V7.5" fill="none"/></g></svg>
<div class="a" style="left:187px;top:100px;width:430px;height:421px;background:#fff;border:1px solid #7a8290"></div>
<div class="a" style="left:189px;top:120px;width:414px;height:1px;background:#ececec"></div>
<div class="a" style="left:604px;top:120px;width:12px;height:1px;background:#ececec"></div>
<div class="a" style="left:189px;top:139px;width:414px;height:1px;background:#ececec"></div>
<div class="a" style="left:604px;top:139px;width:12px;height:1px;background:#ececec"></div>
<div class="a" style="left:189px;top:158px;width:414px;height:1px;background:#ececec"></div>
<div class="a" style="left:604px;top:158px;width:12px;height:1px;background:#ececec"></div>
<div class="a" style="left:189px;top:177px;width:414px;height:1px;background:#ececec"></div>
<div class="a" style="left:604px;top:177px;width:12px;height:1px;background:#ececec"></div>
<div class="a" style="left:189px;top:196px;width:414px;height:1px;background:#ececec"></div>
<div class="a" style="left:604px;top:196px;width:12px;height:1px;background:#ececec"></div>
<div class="a" style="left:189px;top:215px;width:414px;height:1px;background:#ececec"></div>
<div class="a" style="left:604px;top:215px;width:12px;height:1px;background:#ececec"></div>
<div class="a" style="left:189px;top:234px;width:414px;height:1px;background:#ececec"></div>
<div class="a" style="left:604px;top:234px;width:12px;height:1px;background:#ececec"></div>
<div class="a" style="left:189px;top:253px;width:414px;height:1px;background:#ececec"></div>
<div class="a" style="left:604px;top:253px;width:12px;height:1px;background:#ececec"></div>
<div class="a" style="left:189px;top:272px;width:414px;height:1px;background:#ececec"></div>
<div class="a" style="left:604px;top:272px;width:12px;height:1px;background:#ececec"></div>
<div class="a" style="left:189px;top:291px;width:414px;height:1px;background:#ececec"></div>
<div class="a" style="left:604px;top:291px;width:12px;height:1px;background:#ececec"></div>
<div class="a" style="left:189px;top:310px;width:414px;height:1px;background:#ececec"></div>
<div class="a" style="left:604px;top:310px;width:12px;height:1px;background:#ececec"></div>
<div class="a" style="left:189px;top:329px;width:414px;height:1px;background:#ececec"></div>
<div class="a" style="left:604px;top:329px;width:12px;height:1px;background:#ececec"></div>
<div class="a" style="left:189px;top:348px;width:414px;height:1px;background:#ececec"></div>
<div class="a" style="left:604px;top:348px;width:12px;height:1px;background:#ececec"></div>
<div class="a" style="left:189px;top:367px;width:414px;height:1px;background:#ececec"></div>
<div class="a" style="left:604px;top:367px;width:12px;height:1px;background:#ececec"></div>
<div class="a" style="left:189px;top:386px;width:414px;height:1px;background:#ececec"></div>
<div class="a" style="left:604px;top:386px;width:12px;height:1px;background:#ececec"></div>
<div class="a" style="left:189px;top:405px;width:414px;height:1px;background:#ececec"></div>
<div class="a" style="left:604px;top:405px;width:12px;height:1px;background:#ececec"></div>
<div class="a" style="left:189px;top:424px;width:414px;height:1px;background:#ececec"></div>
<div class="a" style="left:604px;top:424px;width:12px;height:1px;background:#ececec"></div>
<div class="a" style="left:189px;top:443px;width:414px;height:1px;background:#ececec"></div>
<div class="a" style="left:604px;top:443px;width:12px;height:1px;background:#ececec"></div>
<div class="a" style="left:189px;top:462px;width:414px;height:1px;background:#ececec"></div>
<div class="a" style="left:604px;top:462px;width:12px;height:1px;background:#ececec"></div>
<div class="a" style="left:189px;top:481px;width:414px;height:1px;background:#ececec"></div>
<div class="a" style="left:604px;top:481px;width:12px;height:1px;background:#ececec"></div>
<div class="a" style="left:189px;top:500px;width:414px;height:1px;background:#ececec"></div>
<div class="a" style="left:604px;top:500px;width:12px;height:1px;background:#ececec"></div>
<div class="a" style="left:347px;top:101px;width:1px;height:419px;background:#e4eef8"></div>
<div class="a" style="left:603px;top:101px;width:1px;height:419px;background:#e4eef8"></div>
<div class="a" style="left:189px;top:121px;width:414px;height:18px;background:#cce8ff"></div>
<div class="a" style="left:347px;top:121px;width:1px;height:18px;background:#fff"></div>
<div class="t" style="left:211px;top:105px;color:#000;letter-spacing:-0.38px">Database</div>
<div class="t" style="left:354px;top:105px;color:#000;letter-spacing:-0.32px">Database table(s)</div>
<div class="t" style="left:211px;top:124px;color:#000;letter-spacing:-1.3px">CSV</div>
<div class="t" style="left:354px;top:124px;color:#000;letter-spacing:-0.24px">Export to CSV file(s)</div>
<div class="t" style="left:211px;top:143px;color:#000;letter-spacing:0.05px">DbUnit</div>
<div class="t" style="left:354px;top:143px;color:#000;letter-spacing:-0.07px">Export to DbUnit XML file(s)</div>
<div class="t" style="left:211px;top:162px;color:#000;letter-spacing:-0.17px">HTML</div>
<div class="t" style="left:354px;top:162px;color:#000;letter-spacing:-0.06px">Export to HTML file(s)</div>
<div class="t" style="left:211px;top:181px;color:#000;letter-spacing:-1.1px">JSON</div>
<div class="t" style="left:354px;top:181px;color:#000;letter-spacing:-0.27px">Export to JSON file(s)</div>
<div class="t" style="left:211px;top:200px;color:#000;letter-spacing:0.16px">Markdown</div>
<div class="t" style="left:354px;top:200px;color:#000;letter-spacing:0.0px">Export to markdown file(s)</div>
<div class="t" style="left:211px;top:219px;color:#000;letter-spacing:-1.07px">SQL</div>
<div class="t" style="left:354px;top:219px;color:#000;letter-spacing:-0.38px">Export to SQL INSERT statements</div>
<div class="t" style="left:211px;top:238px;color:#000;letter-spacing:-0.19px">Source code</div>
<div class="t" style="left:354px;top:238px;color:#000;letter-spacing:-0.15px">Export to source code array</div>
<div class="t" style="left:211px;top:257px;color:#000;letter-spacing:-1.16px">TXT</div>
<div class="t" style="left:354px;top:257px;color:#000;letter-spacing:0.08px">Export to plain text format</div>
<div class="t" style="left:211px;top:276px;color:#000;letter-spacing:-0.3px">XML</div>
<div class="t" style="left:354px;top:276px;color:#000;letter-spacing:-0.07px">Export to XML file(s)</div>
<svg style="left:194px;top:105px" width="14" height="11" viewBox="0 0 14 11"><rect x="0.5" y="0.5" width="13" height="10" rx="1.5" fill="#fff" stroke="#0b8ad0"/><rect x="0.5" y="0" width="13" height="2" fill="#0b8ad0"/><rect x="1" y="2" width="12" height="3.5" fill="#62c3ee"/><path d="M0.5 5.5H13.5M7 0.5V10.5" stroke="#0b8ad0"/></svg>
<svg style="left:194px;top:123px" width="14" height="16" viewBox="0 0 14 16"><path d="M3.0 7.5V0.5H8.5L11.0 3V7.5" fill="none" stroke="#0b8ad0" stroke-width="1.1"/><path d="M8.5 0.5V3H11.0" fill="#0b8ad0" stroke="#0b8ad0" stroke-width="0.8"/><text x="7.0" y="13.3" font-family="Liberation Sans" font-size="7" font-weight="bold" fill="#0b8ad0" text-anchor="middle" textLength="14" lengthAdjust="spacingAndGlyphs">CSV</text><path d="M2.5 14.8H11.5" stroke="#0b8ad0" stroke-width="1.1"/></svg>
<svg style="left:194px;top:142px" width="14" height="16" viewBox="0 0 14 16"><path d="M3.0 7.5V0.5H8.5L11.0 3V7.5" fill="none" stroke="#0b8ad0" stroke-width="1.1"/><path d="M8.5 0.5V3H11.0" fill="#0b8ad0" stroke="#0b8ad0" stroke-width="0.8"/><text x="7.0" y="13.3" font-family="Liberation Sans" font-size="7" font-weight="bold" fill="#0b8ad0" text-anchor="middle" textLength="14" lengthAdjust="spacingAndGlyphs">XML</text><path d="M2.5 14.8H11.5" stroke="#0b8ad0" stroke-width="1.1"/></svg>
<svg style="left:193px;top:161px" width="15" height="16" viewBox="0 0 15 16"><path d="M3.5 7.5V0.5H9.0L11.5 3V7.5" fill="none" stroke="#0b8ad0" stroke-width="1.1"/><path d="M9.0 0.5V3H11.5" fill="#0b8ad0" stroke="#0b8ad0" stroke-width="0.8"/><text x="7.5" y="13.3" font-family="Liberation Sans" font-size="6" font-weight="bold" fill="#0b8ad0" text-anchor="middle" textLength="15" lengthAdjust="spacingAndGlyphs">HTML</text><path d="M3.0 14.8H12.0" stroke="#0b8ad0" stroke-width="1.1"/></svg>
<svg style="left:193px;top:180px" width="15" height="16" viewBox="0 0 15 16"><path d="M3.5 7.5V0.5H9.0L11.5 3V7.5" fill="none" stroke="#0b8ad0" stroke-width="1.1"/><path d="M9.0 0.5V3H11.5" fill="#0b8ad0" stroke="#0b8ad0" stroke-width="0.8"/><text x="7.5" y="13.3" font-family="Liberation Sans" font-size="6" font-weight="bold" fill="#0b8ad0" text-anchor="middle" textLength="15" lengthAdjust="spacingAndGlyphs">JSON</text><path d="M3.0 14.8H12.0" stroke="#0b8ad0" stroke-width="1.1"/></svg>
<svg style="left:194px;top:202px" width="15" height="9" viewBox="0 0 15 9"><path d="M0.8 8V1L3.5 5L6.2 1V8" fill="none" stroke="#0b8ad0" stroke-width="1.3"/><path d="M10.5 0.5V7.5M8 5L10.5 7.8L13 5" fill="none" stroke="#0b8ad0" stroke-width="1.2"/></svg>
<svg style="left:194px;top:218px" width="14" height="16" viewBox="0 0 14 16"><path d="M3.0 7.5V0.5H8.5L11.0 3V7.5" fill="none" stroke="#0b8ad0" stroke-width="1.1"/><path d="M8.5 0.5V3H11.0" fill="#0b8ad0" stroke="#0b8ad0" stroke-width="0.8"/><text x="7.0" y="13.3" font-family="Liberation Sans" font-size="7" font-weight="bold" fill="#0b8ad0" text-anchor="middle" textLength="14" lengthAdjust="spacingAndGlyphs">SQL</text><path d="M2.5 14.8H11.5" stroke="#0b8ad0" stroke-width="1.1"/></svg>
<svg style="left:193px;top:237px" width="16" height="16" viewBox="0 0 16 16"><path d="M4.0 7.5V0.5H9.5L12.0 3V7.5" fill="none" stroke="#0b8ad0" stroke-width="1.1"/><path d="M9.5 0.5V3H12.0" fill="#0b8ad0" stroke="#0b8ad0" stroke-width="0.8"/><text x="8.0" y="13.3" font-family="Liberation Sans" font-size="6" font-weight="bold" fill="#0b8ad0" text-anchor="middle" textLength="16" lengthAdjust="spacingAndGlyphs">CODE</text><path d="M3.5 14.8H12.5" stroke="#0b8ad0" stroke-width="1.1"/></svg>
<svg style="left:194px;top:256px" width="15" height="13" viewBox="0 0 15 13"><path d="M0.8 3.5V0.8H14.2V3.5M7.5 0.8V12M4.5 12H10.5" fill="none" stroke="#0b8ad0" stroke-width="1.6"/></svg>
<svg style="left:194px;top:275px" width="14" height="16" viewBox="0 0 14 16"><path d="M3.0 7.5V0.5H8.5L11.0 3V7.5" fill="none" stroke="#0b8ad0" stroke-width="1.1"/><path d="M8.5 0.5V3H11.0" fill="#0b8ad0" stroke="#0b8ad0" stroke-width="0.8"/><text x="7.0" y="13.3" font-family="Liberation Sans" font-size="7" font-weight="bold" fill="#0b8ad0" text-anchor="middle" textLength="14" lengthAdjust="spacingAndGlyphs">XML</text><path d="M2.5 14.8H11.5" stroke="#0b8ad0" stroke-width="1.1"/></svg>
<div class="a" style="left:620px;top:100px;width:185px;height:421px;background:#fff;border:1px solid #7a8290"></div>
<div class="a" style="left:717px;top:101px;width:1px;height:24px;background:#e5e5e5"></div>
<div class="a" style="left:797px;top:101px;width:1px;height:24px;background:#e5e5e5"></div>
<div class="a" style="left:717px;top:126px;width:1px;height:394px;background:#e4eef8"></div>
<div class="a" style="left:797px;top:126px;width:1px;height:394px;background:#e4eef8"></div>
<div class="a" style="left:621px;top:144px;width:183px;height:1px;background:#ececec"></div>
<div class="a" style="left:621px;top:163px;width:183px;height:1px;background:#ececec"></div>
<div class="a" style="left:621px;top:182px;width:183px;height:1px;background:#ececec"></div>
<div class="a" style="left:621px;top:201px;width:183px;height:1px;background:#ececec"></div>
<div class="a" style="left:621px;top:220px;width:183px;height:1px;background:#ececec"></div>
<div class="a" style="left:621px;top:239px;width:183px;height:1px;background:#ececec"></div>
<div class="a" style="left:621px;top:258px;width:183px;height:1px;background:#ececec"></div>
<div class="a" style="left:621px;top:277px;width:183px;height:1px;background:#ececec"></div>
<div class="a" style="left:621px;top:296px;width:183px;height:1px;background:#ececec"></div>
<div class="a" style="left:621px;top:315px;width:183px;height:1px;background:#ececec"></div>
<div class="a" style="left:621px;top:334px;width:183px;height:1px;background:#ececec"></div>
<div class="a" style="left:621px;top:353px;width:183px;height:1px;background:#ececec"></div>
<div class="a" style="left:621px;top:372px;width:183px;height:1px;background:#ececec"></div>
<div class="a" style="left:621px;top:391px;width:183px;height:1px;background:#ececec"></div>
<div class="a" style="left:621px;top:410px;width:183px;height:1px;background:#ececec"></div>
<div class="a" style="left:621px;top:429px;width:183px;height:1px;background:#ececec"></div>
<div class="a" style="left:621px;top:448px;width:183px;height:1px;background:#ececec"></div>
<div class="a" style="left:621px;top:467px;width:183px;height:1px;background:#ececec"></div>
<div class="a" style="left:621px;top:486px;width:183px;height:1px;background:#ececec"></div>
<div class="a" style="left:621px;top:505px;width:183px;height:1px;background:#ececec"></div>
<div class="t" style="left:628px;top:107px;color:#000;letter-spacing:-0.19px">Exported</div>
<div class="t" style="left:724px;top:107px;color:#000;letter-spacing:-0.09px">Description</div>
<svg style="left:627px;top:128px" width="14" height="13" viewBox="0 0 14 13"><rect x="1" y="1" width="12" height="11" rx="1.5" fill="none" stroke="#0b86cc" stroke-width="1.9"/><rect x="3.5" y="4" width="7" height="1.8" fill="#0b86cc"/><rect x="3.5" y="7.2" width="4.5" height="1.8" fill="#0b86cc"/></svg>
<div class="t" style="left:644px;top:129px;color:#000;letter-spacing:-0.44px">ScoreEntries</div>
<div class="a" style="left:-1px;top:526px;width:811px;height:1px;background:#a0a0a0"></div>
<div class="a" style="left:-1px;top:527px;width:811px;height:1px;background:#fff"></div>
<div class="a" style="left:-1px;top:528px;width:811px;height:90px;background:#efefef"></div>
<div class="a" style="left:170px;top:581px;width:150px;height:23px;background:#f9f9f9;border:1px solid #e3e3e3;border-radius:4px"></div>
<div class="t" style="left:227px;top:586px;color:#8a8a8a">&lt; Back</div>
<div class="a" style="left:328px;top:581px;width:150px;height:23px;background:#fdfdfd;border:1px solid #0067c0;border-radius:4px"></div>
<div class="t" style="left:385px;top:586px;color:#000">Next &gt;</div>
<div class="a" style="left:486px;top:581px;width:150px;height:23px;background:#f9f9f9;border:1px solid #e3e3e3;border-radius:4px"></div>
<div class="t" style="left:539px;top:586px;color:#8a8a8a">Proceed</div>
<div class="a" style="left:644px;top:581px;width:150px;height:23px;background:#fdfdfd;border:1px solid #c8c8c8;border-radius:4px"></div>
<div class="t" style="left:700px;top:586px;color:#000">Cancel</div>
</div>
</body></html>
